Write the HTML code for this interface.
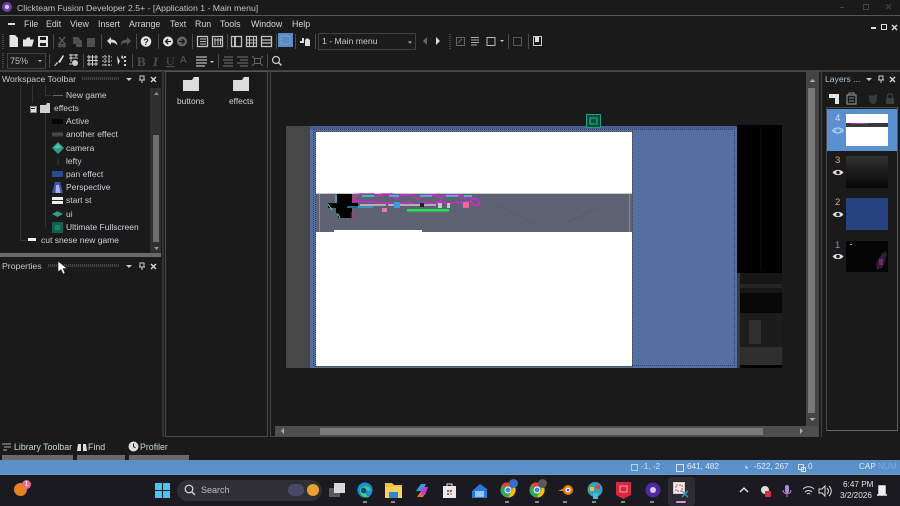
<!DOCTYPE html>
<html><head><meta charset="utf-8">
<style>
html,body{margin:0;padding:0;background:#1a1a1a;}
#p{position:relative;width:900px;height:506px;overflow:hidden;background:#1a1a1a;font-family:"Liberation Sans",sans-serif;font-size:9px;color:#d8d8d8;}
#p div,#p svg{position:absolute;}
.t{white-space:nowrap;line-height:12px;}
.m{top:18px;font-size:8.800px;color:#d6d6d6;}
.tr{font-size:8.500px;color:#d0d0d8;}
.st{font-size:8.200px;color:#e0ecf8;top:461px;}
</style></head><body><div id="p">

<!-- title -->
<svg style="left:1px;top:1px" width="12" height="12" viewBox="0 0 12 12"><circle cx="6" cy="6" r="5" fill="#6b3fa8"/><circle cx="6" cy="6" r="2.200" fill="#d9c8f0"/></svg>
<div class="t" style="left:17px;top:2px;font-size:8.700px;color:#c4c0c8">Clickteam Fusion Developer 2.5+ - [Application 1 - Main menu]</div>
<div style="left:840px;top:7px;width:4px;height:1px;background:#444"></div>
<div style="left:863px;top:4px;width:6px;height:6px;border:1px solid #444;box-sizing:border-box"></div>
<svg style="left:885px;top:3px" width="8" height="8"><path d="M1 1l5 5M6 1l-5 5" stroke="#444" stroke-width="1.200"/></svg>
<div style="left:0;top:15px;width:900px;height:1px;background:#585858"></div>

<!-- menu -->
<div style="left:8px;top:23px;width:7px;height:2px;background:#ddd"></div>
<div class="t m" style="left:24px">File</div>
<div class="t m" style="left:46px">Edit</div>
<div class="t m" style="left:70px">View</div>
<div class="t m" style="left:98px">Insert</div>
<div class="t m" style="left:129px">Arrange</div>
<div class="t m" style="left:170px">Text</div>
<div class="t m" style="left:195px">Run</div>
<div class="t m" style="left:220px">Tools</div>
<div class="t m" style="left:251px">Window</div>
<div class="t m" style="left:292px">Help</div>
<div style="left:871px;top:27px;width:5px;height:2px;background:#ddd"></div>
<div style="left:881px;top:24px;width:6px;height:6px;border:1px solid #ddd;box-sizing:border-box"></div>
<svg style="left:891px;top:24px" width="7" height="7"><path d="M1 1l5 5M6 1l-5 5" stroke="#ddd" stroke-width="1.400"/></svg>

<!-- toolbar 1 -->
<svg style="left:0;top:32px" width="560" height="38" viewBox="0 0 560 38">
<g fill="#e4e4e4">
<path d="M9.500 3h5.500l3 3v9h-8.500z"/>
<path d="M23 7.500h3l1-2h3v2h4l-2 7h-9z"/>
<path fill-rule="evenodd" d="M38 4h10v11H38zM40 5v3h6V5zM40 11v3h6v-3z"/>
</g>
<g stroke="#555" stroke-width="1.400" fill="none"><path d="M59 5l6 7M65 5l-6 7"/><circle cx="60" cy="13.500" r="1.300"/><circle cx="64" cy="13.500" r="1.300"/></g>
<g fill="#4f4f4f"><path d="M73 5h5l2 2v5h-7z"/><path d="M76 8h6v7h-6z"/><path d="M87 6h8v9h-8z"/></g>
<g fill="#d8d8d8"><path d="M107 9l4-4v2.500c4 0 6 2 6.500 6-1.500-2-3.500-3-6.500-3V13z"/></g>
<path fill="#5a5a5a" d="M131 9l-4-4v2.500c-4 0-6 2-6.500 6 1.500-2 3.500-3 6.500-3V13z"/>
<circle cx="146" cy="9.500" r="5.300" fill="#e6e6e6"/>
<text x="146" y="13" text-anchor="middle" font-size="9" font-weight="bold" fill="#1a1a1a" font-family="Liberation Sans">?</text>
<circle cx="168" cy="9.500" r="5" fill="#e2e2e2"/><path d="M171 9.500h-5M168 7L165.500 9.500l2.500 2.500" stroke="#1a1a1a" fill="none" stroke-width="1.300"/>
<circle cx="182" cy="9.500" r="5" fill="#666"/><path d="M179 9.500h5M182 7l2.500 2.500L182 12" stroke="#1a1a1a" fill="none" stroke-width="1.300"/>
<g stroke="#c0c0c0" fill="none" stroke-width="1.300">
<rect x="197.500" y="4.500" width="10" height="10"/><path d="M200 7h6M200 9.500h6M200 12h6" stroke-width="1.100"/>
<rect x="212.500" y="4.500" width="10" height="10"/><path d="M215 6v7M218 6v7M220.500 6v7M214 8h8" stroke-width="1"/>
<rect x="231.500" y="4.500" width="10" height="10"/><path d="M235 5v9" stroke-width="2"/>
<rect x="246.500" y="4.500" width="10" height="10"/><path d="M249.500 5v9M253.500 5v9M247 8h9M247 11h9" stroke-width="1"/>
<rect x="261.500" y="4.500" width="10" height="10"/><path d="M262 8h9M262 11h9" stroke-width="1.200"/>
</g>
<rect x="278" y="1" width="15" height="14" fill="#5a8bc4"/><rect x="281" y="4" width="9" height="8" fill="none" stroke="#7ea4d2" stroke-dasharray="2 1"/>
<g fill="#dcdcdc"><path d="M300 9h4v2h-4zM302 6h2v3h-2z"/><path d="M305 8l2-2 3 2v6h-5z"/></g>
<!-- separators -->
<g stroke="#4a4a4a"><path d="M53.500 2v15M101.500 2v15M136.500 2v15M158.500 2v15M192.500 2v15M227.500 2v15M276.500 2v15M295.500 2v15M315.500 2v15M508.500 2v15M528.500 2v15"/></g>
<path d="M3 2v15M3 21v15M450 2v15" stroke="#444" stroke-width="2" stroke-dasharray="1 1"/>
<!-- right part -->
<rect x="318.500" y="1.500" width="97" height="16" fill="#1c1c1c" stroke="#404040"/>
<path d="M408 9.500h4l-2 2z" fill="#bbb"/>
<path d="M427 5v8l-4-4z" fill="#666"/><path d="M436 5v8l4-4z" fill="#ddd"/>
<g stroke="#666" fill="none"><rect x="456.500" y="5.500" width="8" height="8"/><path d="M458 11l4-4"/></g>
<g stroke="#aaa" fill="none"><path d="M471 5.500h8M471 8h8M471 10.500h8M471 13h6"/></g>
<path d="M487 5.500h8v8h-8z" fill="none" stroke="#bbb"/><path d="M500 8h4l-2 2z" fill="#ccc"/>
<rect x="513.500" y="5.500" width="8" height="8" fill="none" stroke="#555"/>
<rect x="533.500" y="4.500" width="8" height="9" fill="none" stroke="#ccc"/><path d="M535 5h4v5h-4z" fill="#ddd"/>
<!-- row 2 -->
<rect x="7.500" y="21.500" width="38" height="15" fill="#1c1c1c" stroke="#404040"/>
<path d="M38 28h4l-2 2z" fill="#bbb"/>
<path d="M54 34l3-4 1 1-3 3zM58 30l5-7 1 1-4 7z" fill="#ddd"/>
<g stroke="#ccc" fill="none"><path d="M69 23h9M69 26h9M71 22v8M76 22v3"/><circle cx="75" cy="31" r="2.500" fill="#ccc"/><path d="M69 32h3"/></g>
<g stroke="#ccc" fill="none"><path d="M87 25h11M87 28.500h11M87 32h11M89 23v11M92.500 23v11M96 23v11"/></g>
<g stroke="#ccc" fill="none" stroke-dasharray="2 1"><path d="M102 25h10M102 29h10M102 33h10M105 23v11M109 23v11"/></g>
<path d="M117 24l3 5-2 4zM122 23l2 4-3-1z" fill="#ddd"/><g fill="#ccc"><rect x="124" y="24" width="2" height="2"/><rect x="124" y="28" width="2" height="2"/><rect x="124" y="32" width="2" height="2"/></g>
<g stroke="#4a4a4a"><path d="M49.500 22v14M83.500 22v14M132.500 22v14M218.500 22v14M267.500 22v14"/></g>
<text x="137" y="34" font-size="13" font-weight="bold" font-family="Liberation Serif" fill="#4f4f4f">B</text>
<text x="153" y="34" font-size="13" font-style="italic" font-weight="bold" font-family="Liberation Serif" fill="#4f4f4f">I</text>
<text x="166" y="33" font-size="12" font-family="Liberation Serif" fill="#4f4f4f" text-decoration="underline">U</text>
<text x="180" y="31" font-size="10" font-family="Liberation Sans" fill="#5a5a5a">A</text>
<path d="M196 25h11M196 28h11M196 31h11M196 34h9" stroke="#bbb" stroke-width="1.200"/>
<path d="M210 29h4l-2 2z" fill="#ccc"/>
<path d="M224 25h9M223 28h10M224 31h9M223 34h10" stroke="#777"/>
<path d="M237 25h11M240 28h8M237 31h11M240 34h8" stroke="#777"/>
<g stroke="#666" fill="none"><rect x="254.500" y="26.500" width="6" height="5"/><path d="M252 24l3 3M263 24l-3 3M252 34l3-3M263 34l-3-3"/></g>
<circle cx="276" cy="28" r="3.500" fill="none" stroke="#ccc" stroke-width="1.200"/><path d="M278.500 30.500l3 3" stroke="#ccc" stroke-width="1.400"/>
</svg>
<div class="t" style="left:322px;top:35px;font-size:8.700px;color:#c8c8d0">1 - Main menu</div>
<div class="t" style="left:10px;top:55px;font-size:9px;color:#b8c0d0">75%</div>
<div style="left:0;top:70px;width:900px;height:2px;background:#404040"></div>

<!-- workspace panel -->
<div class="t" style="left:2px;top:73px;color:#c8c8cc;font-size:8.700px">Workspace Toolbar</div>
<div style="left:82px;top:77px;width:37px;height:3px;background:repeating-linear-gradient(90deg,#444 0 1px,#222 1px 2px)"></div>
<svg style="left:125px;top:74px" width="35" height="11"><path d="M1 4h6l-3 3z" fill="#ccc"/><path d="M15 2h4v4h-4zM17 6v3M14 6h6" stroke="#ccc" fill="none"/><path d="M26 3l5 5M31 3l-5 5" stroke="#ddd" stroke-width="1.300"/></svg>
<!-- tree lines -->
<div style="left:20px;top:85px;width:1px;height:155px;background:#333"></div>
<div style="left:32px;top:85px;width:1px;height:18px;background:#333"></div>
<div style="left:20px;top:240px;width:7px;height:1px;background:#333"></div>
<div style="left:45px;top:85px;width:1px;height:10px;background:#333"></div>
<div style="left:45px;top:112px;width:1px;height:115px;background:#333"></div>
<div style="left:45px;top:95px;width:7px;height:1px;background:#333"></div>
<!-- tree icons -->
<div style="left:53px;top:95px;width:10px;height:1px;background:#666"></div>
<div style="left:30px;top:106px;width:5px;height:5px;background:#ddd;border:1px solid #888"></div>
<div style="left:31px;top:108px;width:4px;height:1px;background:#222"></div>
<svg style="left:40px;top:103px" width="10" height="10"><path d="M0 2h6l1-2h3v10H0z" fill="#cfcfcf"/></svg>
<div style="left:52px;top:119px;width:11px;height:5px;background:#050505"></div>
<div style="left:52px;top:131px;width:11px;height:7px;background:linear-gradient(#111,#555 45%,#111)"></div>
<svg style="left:52px;top:142px" width="12" height="12"><path d="M6 0l6 6-6 6-6-6z" fill="#2f9b88"/><path d="M6 2l4 4H2z" fill="#57c7ac"/></svg>
<div style="left:57px;top:158px;width:2px;height:7px;background:#2a2a2a"></div>
<div style="left:52px;top:171px;width:11px;height:6px;background:#2a4a8a"></div>
<svg style="left:52px;top:182px" width="11" height="11"><path d="M3 0h5l3 11H0z" fill="#3c55b0"/><path d="M4 3h3l1.500 8h-5z" fill="#a8b2e8"/></svg>
<div style="left:52px;top:197px;width:11px;height:7px;background:#eee"></div>
<div style="left:52px;top:200px;width:11px;height:1px;background:#222"></div>
<svg style="left:52px;top:211px" width="11" height="6"><path d="M5.500 0L11 3 5.500 6 0 3z" fill="#2f9b88"/></svg>
<div style="left:52px;top:222px;width:11px;height:11px;background:#135f4e"></div>
<div style="left:55px;top:225px;width:5px;height:5px;background:#1c8068"></div>
<div style="left:28px;top:238px;width:8px;height:3px;background:#eee"></div>
<!-- tree text -->
<div class="t tr" style="left:66px;top:89px">New game</div>
<div class="t tr" style="left:54px;top:102px">effects</div>
<div class="t tr" style="left:66px;top:115px">Active</div>
<div class="t tr" style="left:66px;top:128px">another effect</div>
<div class="t tr" style="left:66px;top:142px">camera</div>
<div class="t tr" style="left:66px;top:155px">lefty</div>
<div class="t tr" style="left:66px;top:168px">pan effect</div>
<div class="t tr" style="left:66px;top:181px">Perspective</div>
<div class="t tr" style="left:66px;top:194px">start st</div>
<div class="t tr" style="left:66px;top:208px">ui</div>
<div class="t tr" style="left:66px;top:221px">Ultimate Fullscreen</div>
<div class="t tr" style="left:41px;top:234px">cut snese new game</div>
<!-- tree scrollbar -->
<div style="left:150px;top:88px;width:11px;height:165px;background:#2f2f2f"></div>
<div style="left:153px;top:135px;width:6px;height:107px;background:#6e6e6e"></div>
<svg style="left:151px;top:89px" width="10" height="164"><path d="M3 6l2.500-3 2.500 3z" fill="#888"/><path d="M3 158l2.500 3 2.500-3z" fill="#999"/></svg>
<div style="left:0;top:253px;width:161px;height:4px;background:#6a6a6a"></div>
<div class="t" style="left:2px;top:260px;color:#c8c8cc;font-size:8.700px">Properties</div>
<div style="left:48px;top:264px;width:71px;height:3px;background:repeating-linear-gradient(90deg,#444 0 1px,#222 1px 2px)"></div>
<svg style="left:125px;top:261px" width="35" height="11"><path d="M1 4h6l-3 3z" fill="#ccc"/><path d="M15 2h4v4h-4zM17 6v3M14 6h6" stroke="#ccc" fill="none"/><path d="M26 3l5 5M31 3l-5 5" stroke="#ddd" stroke-width="1.300"/></svg>
<div style="left:162px;top:71px;width:2px;height:366px;background:#333"></div>

<!-- folder panel -->
<div style="left:165px;top:71px;width:103px;height:366px;box-sizing:border-box;border:1px solid #4a4a4a;border-top-color:#555"></div>
<svg style="left:183px;top:77px" width="16" height="14"><path d="M0 3h9l2-3h5v14H0z" fill="#dcdcdc"/></svg>
<svg style="left:233px;top:77px" width="16" height="14"><path d="M0 3h9l2-3h5v14H0z" fill="#dcdcdc"/></svg>
<div class="t" style="left:177px;top:95px;color:#c8d4d4;font-size:8.400px">buttons</div>
<div class="t" style="left:229px;top:95px;color:#c8d4d4;font-size:8.400px">effects</div>

<!-- editor panel -->
<div style="left:270px;top:71px;width:549px;height:366px;box-sizing:border-box;border:1px solid #4a4a4a"></div>
<div style="left:821px;top:72px;width:1px;height:365px;background:#444"></div>
<!-- scrollbars -->
<div style="left:806px;top:72px;width:12px;height:364px;background:#444"></div>
<div style="left:808px;top:88px;width:7px;height:325px;background:#777"></div>
<svg style="left:807px;top:72px" width="11" height="356"><path d="M2.500 10l3-3 3 3z" fill="#aaa"/><path d="M2.500 346l3 3 3-3z" fill="#aaa"/></svg>
<div style="left:275px;top:426px;width:543px;height:10px;background:#4e4e4e"></div>
<div style="left:320px;top:428px;width:443px;height:7px;background:#7a7a7a"></div>
<svg style="left:275px;top:426px" width="532" height="10"><path d="M9 2l-3 3 3 3z" fill="#aaa"/><path d="M525 2l3 3-3 3z" fill="#aaa"/></svg>

<!-- frame -->
<div style="left:286px;top:126px;width:24px;height:242px;background:#474747"></div>
<div style="left:737px;top:125px;width:45px;height:243px;background:#000"></div>
<div style="left:760px;top:128px;width:1px;height:142px;background:#0c0c0c"></div>
<div style="left:737px;top:273px;width:45px;height:20px;background:#161616"></div>
<div style="left:737px;top:284px;width:45px;height:4px;background:#252525"></div>
<div style="left:737px;top:293px;width:45px;height:20px;background:#070707"></div>
<div style="left:737px;top:313px;width:45px;height:34px;background:#1c1c1c"></div>
<div style="left:749px;top:320px;width:12px;height:24px;background:#303030"></div>
<div style="left:737px;top:347px;width:45px;height:18px;background:#2e2e2e"></div>
<div style="left:737px;top:273px;width:3px;height:95px;background:#3a3a3a"></div>
<div style="left:310px;top:126px;width:427px;height:242px;background:#55709f"></div>
<div style="left:310px;top:126px;width:427px;height:3px;background:#45608f"></div>
<div style="left:313px;top:129px;width:422px;height:237px;box-sizing:border-box;border:1px dotted #2c4172"></div>
<svg style="left:632px;top:126px" width="105" height="242"><path d="M0 56L105 2M0 186L105 240" stroke="#506a9a" fill="none" stroke-dasharray="3 2"/></svg>
<div style="left:316px;top:132px;width:316px;height:234px;background:#fff;outline:1px dotted #444"></div>
<div style="left:316px;top:194px;width:316px;height:38px;background:#5e6272"></div>
<div style="left:316px;top:193px;width:316px;height:1px;background:#c8c8c8"></div>
<div style="left:319px;top:194px;width:1px;height:38px;background:#8a8a8a"></div>
<div style="left:629px;top:194px;width:1px;height:38px;background:#8a8a8a"></div>
<div style="left:334px;top:230px;width:88px;height:2px;background:#fff"></div>
<svg style="left:316px;top:193px" width="316" height="40" viewBox="0 0 316 40">
<path d="M180 12l40 20M250 30l30-14M285 18l5 4M170 20l3 3" stroke="#585c6c" fill="none"/>
<path d="M21 1h15v9h6v5h-6v10H22v-5h-2v-5H12v-5h9z" fill="#000"/>
<path d="M12 11l4 6M20 2v8M22 21l2 4" stroke="#38d8c8" fill="none"/>
<path d="M37 1v8M36 25v-6" stroke="#f03060" fill="none"/>
<path transform="translate(38 0) scale(.87 1) translate(-38 0)" d="M38 8l2-5 6-3h14l3 4 7-3h12l4 5 6-4h14l5 4 7-4h14l6 3 6-3h16l4 3 5-2 5 3h6l3 6h-7l-4-4-10 2-7-1-8 2-10-3-8 3-10-2-10 3-9-3-11 2-10-1z" fill="none" stroke="#e81ce8" stroke-width="1.300"/>
<path d="M46 3h12M73 3h10M104 3h12M130 3h12M148 3h8" stroke="#2ce8e8" stroke-width="1.300"/>
<path d="M44 12h26M72 12h48" stroke="#b0b0b0" stroke-width="2"/>
<path d="M31 14h26" stroke="#38a8e8" stroke-width="1.200"/>
<rect x="66" y="15" width="5" height="4" fill="#e878a8"/>
<rect x="78" y="9" width="6" height="6" fill="#34a0e0"/>
<rect x="104" y="10" width="4" height="4" fill="#222"/>
<rect x="122" y="10" width="4" height="5" fill="#c8c8c8"/><rect x="131" y="10" width="3" height="5" fill="#c8c8c8"/>
<rect x="147" y="9" width="6" height="6" fill="#f06898"/>
<rect x="91" y="16" width="42" height="2.500" fill="#1ce84c"/>
</svg>
<svg style="left:586px;top:114px" width="16" height="15"><rect x="0.500" y="0.500" width="14" height="13" fill="#0e4a40" stroke="#2a9c80"/><rect x="4" y="4" width="7" height="6" fill="none" stroke="#18c878"/></svg>

<!-- layers panel -->
<div class="t" style="left:825px;top:73px;color:#b0c4d0;font-size:8.600px">Layers ...</div>
<svg style="left:865px;top:74px" width="35" height="11"><path d="M1 4h6l-3 3z" fill="#ccc"/><path d="M14 2h4v4h-4zM16 6v3M13 6h6" stroke="#ccc" fill="none"/><path d="M25 3l5 5M30 3l-5 5" stroke="#ddd" stroke-width="1.300"/></svg>
<svg style="left:828px;top:92px" width="68" height="13">
<path d="M1 2h10v10H7V6H1z" fill="#e4e4e4"/>
<path d="M19 3h9v9h-9z" fill="none" stroke="#888" stroke-width="1.200"/><path d="M21 1h5v2h-5zM21 6h5M21 9h5" stroke="#888" fill="none"/>
<path d="M41 3c3 1 5 1 8-1v5c0 3-2 5-4 5s-4-2-4-5z" fill="#3a3a3a"/>
<path d="M58 6h8v6h-8z" fill="#3e3e3e"/><path d="M59.500 6V4c0-3 5-3 5 0v2" stroke="#3e3e3e" fill="none" stroke-width="1.300"/>
</svg>
<div style="left:826px;top:107px;width:72px;height:324px;box-sizing:border-box;border:1px solid #4a4a4a;border-bottom-color:#666;border-right-color:#5a5a5a"></div>
<div style="left:827px;top:109px;width:70px;height:42px;background:#5a8fd0"></div>
<div style="left:846px;top:114px;width:42px;height:32px;background:#fff"></div>
<div style="left:846px;top:123px;width:42px;height:4px;background:#3a3a3a"></div>
<div style="left:851px;top:123px;width:17px;height:1px;background:#c030c0"></div>
<div class="t" style="left:835px;top:113px;color:#cfe0f4;font-size:9.500px">4</div>
<div style="left:846px;top:156px;width:42px;height:32px;background:linear-gradient(#333,#1c1c1c 45%,#080808)"></div>
<div class="t" style="left:835px;top:155px;color:#d0b080;font-size:9.500px">3</div>
<div style="left:846px;top:198px;width:42px;height:32px;background:#26437f"></div>
<div class="t" style="left:835px;top:197px;color:#d0b080;font-size:9.500px">2</div>
<div style="left:846px;top:241px;width:42px;height:31px;background:#040404"></div>
<svg style="left:846px;top:241px" width="42" height="31"><path d="M30 22l5-8 4-4 2 3-2 8-3 6-5 2z" fill="#341a34"/><path d="M33 18h4v6h-4z" fill="#6a2a5a"/><rect x="4" y="3" width="2" height="1" fill="#bbb"/></svg>
<div class="t" style="left:835px;top:240px;color:#5a9ae8;font-size:9.500px">1</div>
<svg style="left:832px;top:126px" width="12" height="9"><path d="M0.500 4.500C3 1 9 1 11.500 4.500 9 8 3 8 0.500 4.500z" fill="#8eb4e2" stroke="#c8dcf2" stroke-width=".8"/><circle cx="6" cy="4.500" r="1.800" fill="#5a8fd0"/></svg>
<svg style="left:832px;top:168px" width="12" height="9"><path d="M0.500 4.500C3 1 9 1 11.500 4.500 9 8 3 8 0.500 4.500z" fill="#ddd"/><circle cx="6" cy="4.500" r="1.800" fill="#222"/></svg>
<svg style="left:832px;top:210px" width="12" height="9"><path d="M0.500 4.500C3 1 9 1 11.500 4.500 9 8 3 8 0.500 4.500z" fill="#ddd"/><circle cx="6" cy="4.500" r="1.800" fill="#222"/></svg>
<svg style="left:832px;top:252px" width="12" height="9"><path d="M0.500 4.500C3 1 9 1 11.500 4.500 9 8 3 8 0.500 4.500z" fill="#ddd"/><circle cx="6" cy="4.500" r="1.800" fill="#222"/></svg>

<!-- bottom tabs -->
<svg style="left:2px;top:442px" width="10" height="10"><path d="M0 2h9M2 5h7M1 8h4" stroke="#aaa" fill="none"/></svg>
<div class="t" style="left:14px;top:441px;color:#ccd8d8;font-size:8.800px">Library Toolbar</div>
<svg style="left:77px;top:442px" width="10" height="10"><path d="M1 2h3v7H0zM6 2h3l1 7H6z" fill="#ddd"/></svg>
<div class="t" style="left:88px;top:441px;color:#ccd8d8;font-size:8.800px">Find</div>
<svg style="left:128px;top:441px" width="11" height="11"><circle cx="5.500" cy="5.500" r="5" fill="#ddd"/><path d="M5.500 2.500v3l2 1.500" stroke="#222" fill="none"/></svg>
<div class="t" style="left:140px;top:441px;color:#ccd8d8;font-size:8.800px">Profiler</div>
<div style="left:2px;top:455px;width:71px;height:5px;background:#6a6a6a"></div>
<div style="left:77px;top:455px;width:48px;height:5px;background:#6a6a6a"></div>
<div style="left:129px;top:455px;width:60px;height:5px;background:#6a6a6a"></div>

<!-- status bar -->
<div style="left:0;top:460px;width:900px;height:14px;background:#5a8fc8"></div>
<svg style="left:630px;top:463px" width="200" height="10"><path d="M1.500 1.500h6v6h-6z" fill="none" stroke="#b4cce4"/><path d="M46.500 1.500h7v7h-7z" fill="none" stroke="#d4e2f0"/><path d="M115 2l3 3-2 1z" fill="#e4eef8"/><path d="M168.500 1.500h5v5h-5zM171.500 4.500h4v4h-4z" fill="none" stroke="#d4e2f0"/></svg>
<div class="t st" style="left:641px;color:#d4e2f2">-1, -2</div>
<div class="t st" style="left:687px">641, 482</div>
<div class="t st" style="left:754px">-522, 267</div>
<div class="t st" style="left:808px">0</div>
<div class="t st" style="left:859px">CAP</div>
<div class="t st" style="left:878px;color:#7ea8d8">NUM</div>

<!-- taskbar -->
<div style="left:0;top:474px;width:900px;height:1px;background:#6d96c6"></div>
<div style="left:0;top:475px;width:900px;height:31px;background:#1a1a20"></div>
<div style="left:14px;top:483px;width:13px;height:13px;border-radius:50%;background:#e8811f"></div>
<div style="left:22px;top:480px;width:9px;height:9px;border-radius:50%;background:#ee6a8c;color:#fff;font-size:7px;line-height:9px;text-align:center">1</div>
<svg style="left:155px;top:483px" width="15" height="15"><path d="M0 0h7v7H0zM8 0h7v7H8zM0 8h7v7H0zM8 8h7v7H8z" fill="#4cc4ee"/></svg>
<div style="left:177px;top:480px;width:145px;height:21px;border-radius:11px;background:#2f2f35"></div>
<svg style="left:184px;top:484px" width="12" height="12"><circle cx="5" cy="5" r="3.800" fill="none" stroke="#ddd" stroke-width="1.200"/><path d="M8 8l3 3" stroke="#ddd" stroke-width="1.300"/></svg>
<div class="t" style="left:201px;top:484px;color:#bdbdc0;font-size:9px">Search</div>
<div style="left:288px;top:484px;width:16px;height:12px;border-radius:6px;background:#4a4a68"></div>
<div style="left:307px;top:484px;width:12px;height:12px;border-radius:50%;background:#e8a030"></div>
<div style="left:329px;top:488px;width:11px;height:9px;background:#5a5a5a"></div>
<div style="left:334px;top:483px;width:11px;height:10px;background:#d8d8d8"></div>
<svg style="left:357px;top:482px" width="16" height="16" viewBox="0 0 17 17"><circle cx="8.500" cy="8.500" r="8" fill="#1a90d8"/><path d="M3 9c1-6 11-6 12 1-3-2-7-1-6 3 1 2 3 3 5 2-3 3-10 1-11-6z" fill="#46d27a"/><circle cx="7" cy="9" r="3" fill="#0c4a80"/></svg>
<svg style="left:385px;top:483px" width="17" height="15"><path d="M0 0h7l2 2h8v3H0z" fill="#eec24a"/><path d="M0 4h17v11H0z" fill="#f5d35c"/><rect x="4" y="9" width="9" height="6" fill="#2a88d8"/></svg>
<svg style="left:414px;top:483px" width="15" height="15"><path d="M2 8L7 1h5L8 8z" fill="#2aa0e8"/><path d="M3 14L8 7h5l-4 7z" fill="#e87830"/><path d="M8 4h6l-3 8H7z" fill="#c040c8"/></svg>
<svg style="left:442px;top:483px" width="15" height="16"><path d="M1 3h13v12H1z" fill="#e8e8f0"/><path d="M5 1h5v3H5z" fill="none" stroke="#e8e8f0"/><path d="M5 7h2v2H5zM8 7h2v2H8z" fill="#e04040"/><path d="M5 10h2v2H5z" fill="#2a90e0"/><path d="M8 10h2v2H8z" fill="#e0b030"/></svg>
<svg style="left:472px;top:484px" width="15" height="14"><path d="M8 0l7 5v9H0V7z" fill="#2a78d8"/><path d="M3 7h9v6H3z" fill="#8ec8f8"/></svg>
<svg style="left:500px;top:482px" width="16" height="16" viewBox="0 0 17 17"><circle cx="8.500" cy="8.500" r="8" fill="#34a853"/><path d="M8.500.5a8 8 0 017 4H8.500a4 4 0 00-3.500 2L2 3a8 8 0 016.500-2.500z" fill="#ea4335"/><path d="M15.500 4.500a8 8 0 01-7 12l3.500-6a4 4 0 000-6z" fill="#fbbc04"/><circle cx="8.500" cy="8.500" r="3.200" fill="#4285f4" stroke="#fff"/></svg>
<div style="left:509px;top:479px;width:9px;height:9px;border-radius:50%;background:#3a6ad0"></div>
<svg style="left:529px;top:482px" width="16" height="16" viewBox="0 0 17 17"><circle cx="8.500" cy="8.500" r="8" fill="#34a853"/><path d="M8.500.5a8 8 0 017 4H8.500a4 4 0 00-3.500 2L2 3a8 8 0 016.500-2.500z" fill="#ea4335"/><path d="M15.500 4.500a8 8 0 01-7 12l3.500-6a4 4 0 000-6z" fill="#fbbc04"/><circle cx="8.500" cy="8.500" r="3.200" fill="#4285f4" stroke="#fff"/></svg>
<div style="left:538px;top:479px;width:9px;height:9px;border-radius:50%;background:#5a5a5a"></div>
<svg style="left:558px;top:484px" width="16" height="13"><circle cx="10" cy="6" r="5" fill="#e87d0d"/><circle cx="10" cy="6" r="2.500" fill="#fff"/><circle cx="10" cy="6" r="1.300" fill="#2a6ab0"/><path d="M0 7l6-3v3z" fill="#e87d0d"/></svg>
<svg style="left:587px;top:482px" width="16" height="17"><circle cx="8" cy="7.500" r="7.500" fill="#3aa0b8"/><path d="M3 5h4v4H3z" fill="#e8c040"/><path d="M9 3h4v4H9z" fill="#d84848"/><path d="M6 11h5v6H6z" fill="#48b8d8"/></svg>
<svg style="left:616px;top:482px" width="15" height="17"><path d="M0 0h15v13l-7.500 4L0 13z" fill="#d8283c"/><rect x="4" y="4" width="7" height="6" fill="none" stroke="#f4a0a8"/></svg>
<svg style="left:645px;top:482px" width="16" height="16"><circle cx="8" cy="8" r="7.500" fill="#5028a0"/><circle cx="8" cy="8" r="3" fill="#d8c8f0"/></svg>
<div style="left:668px;top:477px;width:27px;height:29px;background:#2b2b30;border-radius:3px"></div>
<svg style="left:673px;top:482px" width="16" height="16"><rect x="0.500" y="0.500" width="11" height="11" fill="#eee" stroke="#ccc"/><rect x="3" y="3" width="6" height="6" fill="none" stroke="#e04040" stroke-dasharray="2 1"/><path d="M9 9l6 6M15 9l-6 6" stroke="#38a0c8" stroke-width="1.300"/></svg>
<div style="left:676px;top:501px;width:10px;height:2px;background:#d890e8;border-radius:1px"></div>
<!-- running dots -->
<div style="left:363px;top:501px;width:4px;height:1.500px;background:#888"></div>
<div style="left:391px;top:501px;width:4px;height:1.500px;background:#888"></div>
<div style="left:505px;top:501px;width:4px;height:1.500px;background:#888"></div>
<div style="left:535px;top:501px;width:4px;height:1.500px;background:#888"></div>
<div style="left:563px;top:501px;width:4px;height:1.500px;background:#888"></div>
<div style="left:592px;top:501px;width:4px;height:1.500px;background:#888"></div>
<div style="left:621px;top:501px;width:4px;height:1.500px;background:#888"></div>
<div style="left:650px;top:501px;width:4px;height:1.500px;background:#888"></div>
<!-- tray -->
<svg style="left:738px;top:484px" width="150" height="14">
<path d="M2 8l4-4 4 4" stroke="#eee" fill="none" stroke-width="1.300"/>
<circle cx="27" cy="6" r="4" fill="#ddd"/><rect x="27" y="7" width="6" height="6" fill="#d03040"/>
<rect x="47" y="1" width="4" height="8" rx="2" fill="#b088d8"/><path d="M45 6c0 5 8 5 8 0M49 10v3" stroke="#b088d8" fill="none"/>
<path d="M65 5c3-3 8-3 11 0M67 8c2-2 5-2 7 0M69 10c1-1 2-1 3 0" stroke="#ddd" fill="none"/>
<path d="M81 5h3l3-3v10l-3-3h-3zM89 4c2 2 2 4 0 6M91 2c3 3 3 7 0 10" stroke="#ddd" fill="none"/>
<path d="M141 2h6v8h-6zM139 11h10" stroke="#eee" stroke-width="1.500" fill="#eee"/>
</svg>
<div class="t" style="left:843px;top:479px;color:#e4e4e4;font-size:8.200px">6:47 PM</div>
<div class="t" style="left:840px;top:490px;color:#e4e4e4;font-size:8.200px">3/2/2026</div>

<!-- cursor -->
<svg style="left:57px;top:261px" width="10" height="14"><path d="M1 0v11l3-2.500 2 4.500 2-1-2-4.500h4z" fill="#fff" stroke="#222" stroke-width=".6"/></svg>
</div></body></html>
